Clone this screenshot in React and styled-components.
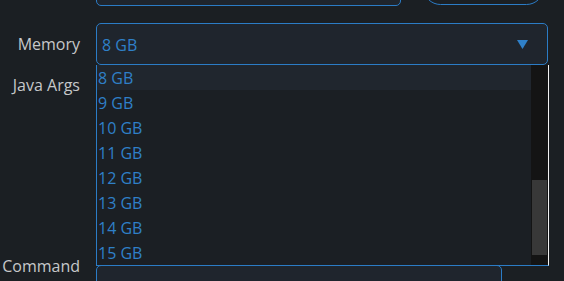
import React from "react";
import styled, { createGlobalStyle } from "styled-components";

const GlobalStyle = createGlobalStyle`
    html, body {
        margin: 0;
        padding: 0;
        background: #1b1f23;
        overflow: hidden;
    }
    body {
        font-family: "Open Sans", "Noto Sans", sans-serif;
    }
`;

const sizes = ["8 GB", "9 GB", "10 GB", "11 GB", "12 GB", "13 GB", "14 GB", "15 GB"];

const App = () => {
    return (
        <>
            <GlobalStyle />
            <Page>
                <Form>
                    <Label />
                    <TopRow>
                        <TextInput type="text" />
                        <PillButton />
                    </TopRow>

                    <Label>Memory</Label>
                    <SelectWrap>
                        <SelectBox>
                            <SelectValue>8 GB</SelectValue>
                            <svg width="11" height="9" viewBox="0 0 11 9">
                                <polygon points="0,0 11,0 5.5,9" fill="#2f80c8" />
                            </svg>
                        </SelectBox>
                        <Dropdown>
                            <OptionList>
                                {sizes.map((s, i) => (
                                    <Option key={s} $active={i === 0}>{s}</Option>
                                ))}
                            </OptionList>
                            <ScrollTrack>
                                <ScrollThumb />
                            </ScrollTrack>
                        </Dropdown>
                    </SelectWrap>

                    <Label $top>Java Args</Label>
                    <TextArea $height={166} />

                    <Label $top $shift={-10}>Command</Label>
                    <TextArea $height={60} $width={406} />
                </Form>
            </Page>
        </>
    );
};

const Page = styled.div`
    width: 564px;
    height: 281px;
    overflow: hidden;
    background: #1b1f23;
`;

const Form = styled.div`
    display: grid;
    grid-template-columns: 80px 1fr;
    column-gap: 16px;
    row-gap: 17px;
    width: 548px;
    margin-top: -30px;
`;

const Label = styled.div`
    color: #c6c8ca;
    font-size: 16px;
    line-height: 22px;
    text-align: right;
    align-self: ${(p) => (p.$top ? "start" : "center")};
    margin-top: ${(p) => (p.$top ? `${p.$shift ?? -8}px` : "0")};
    white-space: nowrap;
`;

const TopRow = styled.div`
    display: flex;
    align-items: flex-start;
    gap: 22px;
`;

const TextInput = styled.input`
    width: 305px;
    height: 36px;
    box-sizing: border-box;
    margin: 0;
    background: #1f252d;
    border: 1px solid #2b7cc6;
    border-radius: 5px;
`;

const PillButton = styled.button`
    width: 121px;
    height: 35px;
    box-sizing: border-box;
    background: #1b1f23;
    border: 1px solid #2b7cc6;
    border-radius: 18px;
`;

const SelectWrap = styled.div`
    position: relative;
`;

const SelectBox = styled.div`
    display: flex;
    align-items: center;
    justify-content: space-between;
    height: 42px;
    box-sizing: border-box;
    padding: 0 19px 0 5px;
    background: #1f252d;
    border: 1px solid #2b7cc6;
    border-radius: 5px;
`;

const SelectValue = styled.span`
    color: #2f80c8;
    font-size: 16px;
    line-height: 22px;
    padding-top: 1px;
`;

const Dropdown = styled.div`
    position: absolute;
    top: 42px;
    left: 0;
    width: 453px;
    height: 201px;
    box-sizing: border-box;
    display: flex;
    background: #1b1f24;
    border-left: 1px solid #2b7cc6;
    border-bottom: 1px solid #2b7cc6;
    border-right: 1px solid #f2f2f2;
    z-index: 2;
`;

const OptionList = styled.div`
    flex: 1;
    display: flex;
    flex-direction: column;
`;

const Option = styled.div`
    height: 25px;
    line-height: 26px;
    overflow: hidden;
    padding-left: 1px;
    font-size: 16px;
    color: #2f80c8;
    background: ${(p) => (p.$active ? "#20262e" : "transparent")};
`;

const ScrollTrack = styled.div`
    width: 17px;
    background: #141414;
    padding: 115px 1px 0 1px;
    box-sizing: border-box;
`;

const ScrollThumb = styled.div`
    height: 75px;
    background: #383838;
`;

const TextArea = styled.div`
    height: ${(p) => p.$height}px;
    width: ${(p) => (p.$width ? `${p.$width}px` : "auto")};
    box-sizing: border-box;
    background: #1f252d;
    border: 1px solid #2b7cc6;
    border-radius: 5px;
`;

export default App;
